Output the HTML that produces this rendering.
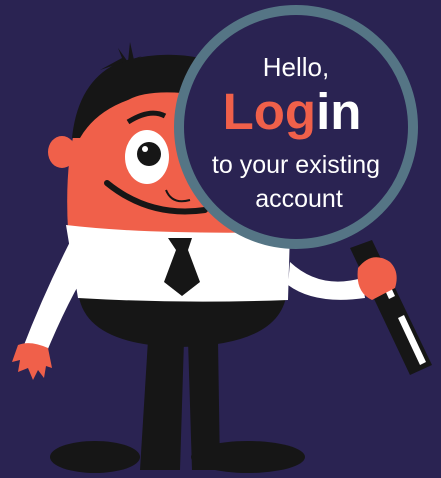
<!DOCTYPE html>
<html><head><style>
html,body{margin:0;padding:0;background:#2a2352;}
svg{display:block}
</style></head><body>
<svg width="441" height="478" viewBox="0 0 441 478" xmlns="http://www.w3.org/2000/svg">
<rect width="441" height="478" fill="#2a2352"/>
<!-- feet -->
<ellipse cx="95" cy="457" rx="45" ry="16" fill="#161616"/>
<ellipse cx="248" cy="457" rx="57" ry="16" fill="#161616"/>
<!-- legs -->
<path d="M148 340 L184 340 L180 470 L140 470 Z" fill="#161616"/>
<path d="M188 340 L218 340 L220 470 L192 470 Z" fill="#161616"/>
<!-- left arm -->
<path d="M75 232 Q45 290 22 350 L45 356 Q68 300 92 262 Z" fill="#fff"/>
<path d="M18 345 Q30 340 48 348 L52 368 L46 366 L44 378 L38 370 L33 380 L28 368 L18 372 L20 360 L12 362 Z" fill="#f0604a"/>
<!-- body black bottom -->
<path d="M78 290 Q82 345 180 347 Q283 345 287 290 Z" fill="#161616"/>
<!-- head -->
<path d="M68 230 Q62 120 100 80 Q140 52 200 58 Q260 65 280 120 Q295 180 290 235 Z" fill="#f0604a"/>
<!-- hair -->
<path d="M72 138 Q78 80 120 62 Q160 50 200 58 L200 95 Q150 88 128 100 Q95 112 80 138 Z" fill="#161616"/>
<path d="M100 70 L122 58 L118 48 L128 62 L130 42 L134 60 L142 56 Z" fill="#161616"/>
<!-- ear -->
<ellipse cx="62" cy="152" rx="14" ry="16" fill="#f0604a"/>
<!-- brow -->
<path d="M128 122 Q150 108 165 116" stroke="#161616" stroke-width="5" fill="none"/>
<!-- eye -->
<ellipse cx="147" cy="157" rx="22" ry="27" fill="#fff"/>
<circle cx="149" cy="154" r="12" fill="#161616"/>
<circle cx="145" cy="149" r="3" fill="#fff"/>
<!-- smile -->
<path d="M107 183 Q150 218 205 210" stroke="#161616" stroke-width="6" fill="none" stroke-linecap="round"/>
<path d="M166 190 Q172 205 190 200" stroke="#161616" stroke-width="2" fill="none"/>
<!-- shirt -->
<path d="M66 225 Q150 235 290 232 L288 300 Q180 304 78 298 Z" fill="#fff"/>
<!-- tie -->
<path d="M168 238 L192 238 L188 250 L200 282 L182 296 L164 282 L176 250 Z" fill="#161616"/>
<!-- right arm -->
<path d="M290 262 Q320 290 362 278 L365 298 Q315 305 288 285 Z" fill="#fff"/>
<!-- handle -->
<path d="M350 248 L372 240 L432 365 L410 375 Z" fill="#161616"/>
<path d="M398 318 L404 315 L426 362 L420 365 Z" fill="#fff"/>
<path d="M372 262 L378 259 L395 296 L389 299 Z" fill="#fff"/>
<!-- hand -->
<path d="M358 268 Q372 250 390 262 Q400 272 395 288 L372 300 Q355 292 358 268 Z" fill="#f0604a"/>
<!-- magnifier -->
<circle cx="296" cy="127" r="117" fill="#2a2352" stroke="#557585" stroke-width="10"/>
<g font-family="Liberation Sans, sans-serif" text-anchor="middle">
<text x="296" y="76" font-size="26" fill="#fff">Hello,</text>
<text x="292" y="129" font-size="51" font-weight="bold"><tspan fill="#f0604a">Log</tspan><tspan fill="#fff">in</tspan></text>
<text x="296" y="173" font-size="25" fill="#fff">to your existing</text>
<text x="299" y="207" font-size="25" fill="#fff">account</text>
</g>
</svg>
</body></html>
